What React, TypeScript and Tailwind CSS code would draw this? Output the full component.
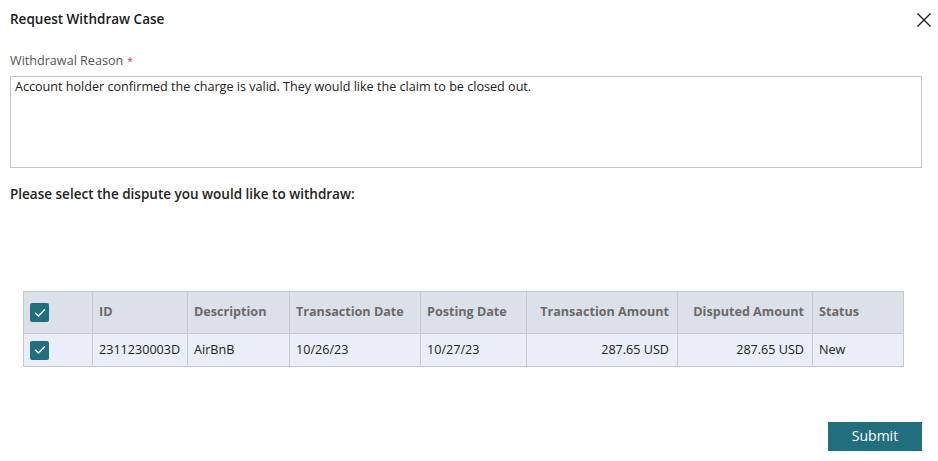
import React from "react";

const Check = () => (
  <div className="w-[19px] h-[19px] rounded-[2px] bg-[#206e7e] flex items-center justify-center">
    <svg width="12" height="10" viewBox="0 0 12 10" fill="none">
      <path d="M1.5 5.2 L4.5 8 L10.5 1.8" stroke="white" strokeWidth="1.4" strokeLinecap="round" strokeLinejoin="round" />
    </svg>
  </div>
);

const cols = [
  { w: 69, label: "", align: "left" },
  { w: 95, label: "ID", align: "left" },
  { w: 102, label: "Description", align: "left" },
  { w: 131, label: "Transaction Date", align: "left" },
  { w: 106, label: "Posting Date", align: "left" },
  { w: 151, label: "Transaction Amount", align: "right" },
  { w: 135, label: "Disputed Amount", align: "right" },
  { w: 91, label: "Status", align: "left" },
];

const row = ["", "2311230003D", "AirBnB", "10/26/23", "10/27/23", "287.65 USD", "287.65 USD", "New"];

export default function App() {
  return (
    <div className="w-[938px] h-[461px] bg-white relative text-[#222]" style={{ fontFamily: '"Open Sans", sans-serif' }}>
      <div className="flex items-center justify-between pl-[10px] pr-[6px] pt-[9px]">
        <div className="text-[13.5px] font-semibold text-[#1a1a1a] leading-[20px]">Request Withdraw Case</div>
        <svg width="16" height="16" viewBox="0 0 16 16" className="mt-[2px]">
          <path d="M1.5 1.5 L14.5 14.5 M14.5 1.5 L1.5 14.5" stroke="#222" strokeWidth="1.4" />
        </svg>
      </div>
      <div className="px-[10px] mt-[23px]">
        <div className="text-[12.6px] text-[#555] leading-[18px] flex items-start">
          Withdrawal Reason<span className="text-[#d9342b] text-[10px] ml-[4px] leading-[18px]">*</span>
        </div>
        <div className="mt-[6px] w-[912px] h-[92px] border border-[#c3c7cf] px-[4px] pt-[1px] text-[12.6px] leading-[18px] text-[#222]">
          Account holder confirmed the charge is valid. They would like the claim to be closed out.
        </div>
        <div className="mt-[16px] text-[13.5px] font-semibold text-[#222] leading-[20px]">
          Please select the dispute you would like to withdraw:
        </div>
      </div>
      <div className="ml-[23px] mt-[87px]">
        <table className="border-collapse table-fixed w-[881px] text-[12.6px]">
          <colgroup>
            {cols.map((c, i) => (
              <col key={i} style={{ width: c.w }} />
            ))}
          </colgroup>
          <thead>
            <tr className="bg-[#dce0e8] h-[42px]">
              {cols.map((c, i) => (
                <th
                  key={i}
                  className={`border border-[#c4c8d0] pl-[6px] pr-[8px] font-bold text-[#6a6a6a] whitespace-nowrap ${c.align === "right" ? "text-right" : "text-left"}`}
                >
                  {i === 0 ? <Check /> : c.label}
                </th>
              ))}
            </tr>
          </thead>
          <tbody>
            <tr className="bg-[#e9eef8] h-[33px]">
              {row.map((v, i) => (
                <td
                  key={i}
                  className={`border border-[#c4c8d0] pl-[6px] pr-[8px] text-[#222] whitespace-nowrap ${cols[i].align === "right" ? "text-right" : "text-left"}`}
                >
                  {i === 0 ? <Check /> : v}
                </td>
              ))}
            </tr>
          </tbody>
        </table>
      </div>
      <div className="absolute left-[828px] top-[422px] w-[94px] h-[29px] bg-[#206e7e] text-white text-[14px] flex items-center justify-center pb-[3px]">
        Submit
      </div>
    </div>
  );
}
